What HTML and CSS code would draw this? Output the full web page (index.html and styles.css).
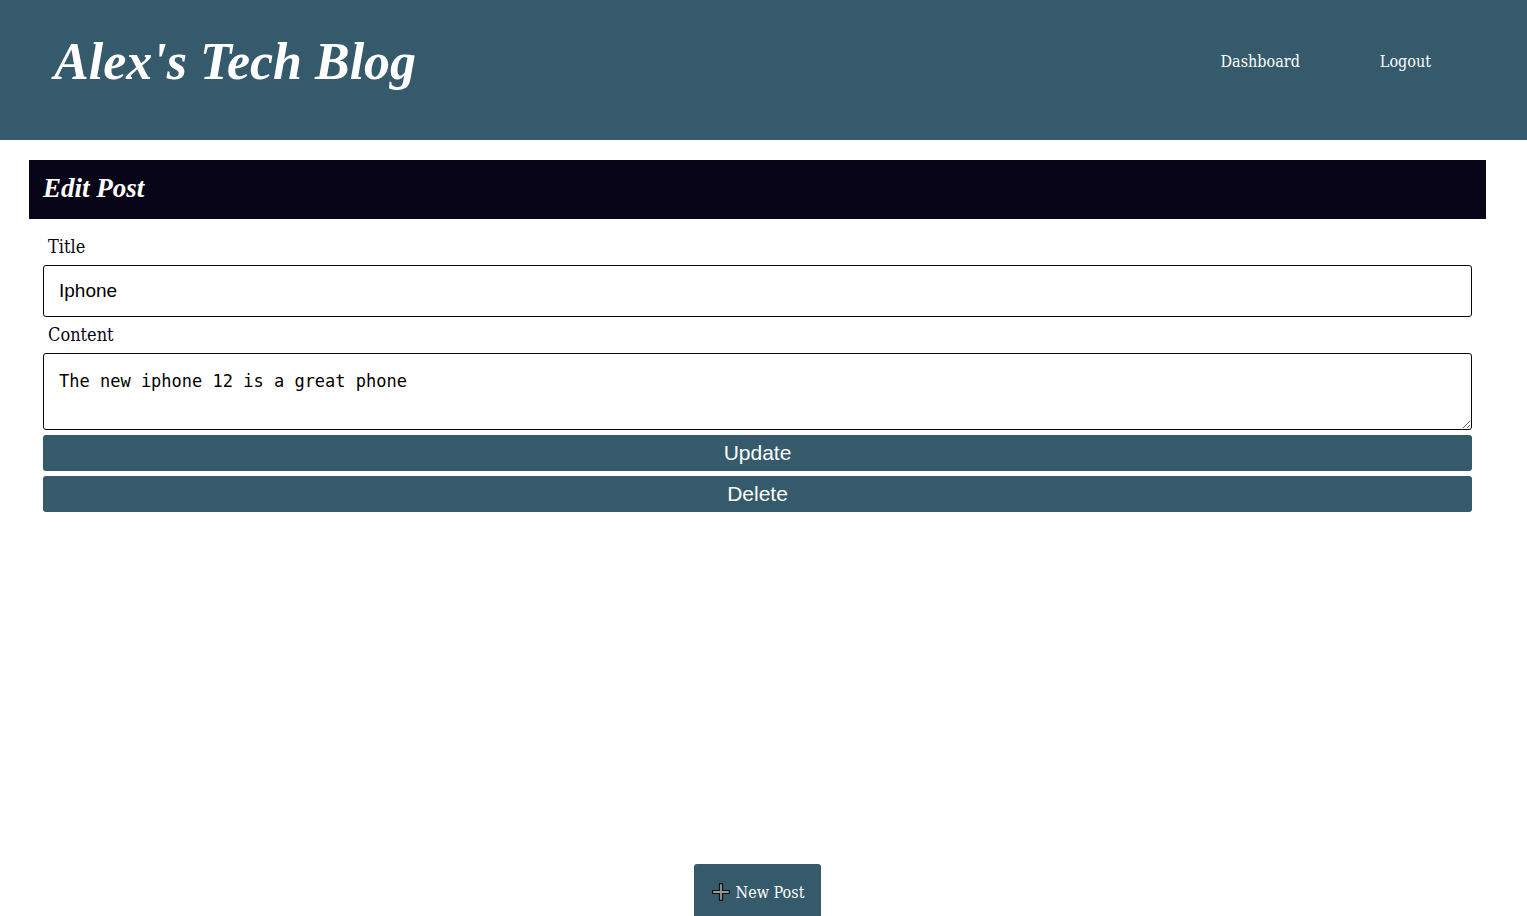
FILE: index.html
```html
<!DOCTYPE html>
<html lang="en">
<head>
  <meta charset="utf-8">
  <meta name="viewport" content="width=device-width, initial-scale=1">
  <title>Alex's Tech Blog</title>
  <link rel="stylesheet" href="styles.css">
</head>
<body>
  <header class="site-header">
    <h1 class="brand">Alex's Tech Blog</h1>
    <nav class="site-nav">
      <a href="#dashboard">Dashboard</a>
      <a href="#logout">Logout</a>
    </nav>
  </header>
  <main class="content">
    <h2 class="panel-title">Edit Post</h2>
    <form class="post-form">
      <label for="title">Title</label>
      <input id="title" type="text" value="Iphone">
      <label for="body">Content</label>
      <textarea id="body">The new iphone 12 is a great phone</textarea>
      <button type="submit">Update</button>
      <button type="button">Delete</button>
    </form>
  </main>
  <footer class="site-footer">
    <a class="new-post" href="#new">
      <svg class="plus" viewBox="0 0 18 18" aria-hidden="true">
        <path d="M7.5 .6h3v6.9h6.9v3h-6.9v6.9h-3v-6.9H.6v-3h6.9z" fill="#999" stroke="#111" stroke-width="1.2"/>
      </svg>
      <span>New Post</span>
    </a>
  </footer>
</body>
</html>
```
FILE: styles.css
```css
* {
  box-sizing: border-box;
}

body {
  display: flex;
  flex-direction: column;
  min-height: 100vh;
  margin: 0;
  background: #fff;
  color: #080518;
  font-family: "DejaVu Serif Condensed", "DejaVu Serif", serif;
}

h1,
h2 {
  margin: 0;
  color: #fff;
  font-family: "Liberation Serif", serif;
  font-style: italic;
  font-weight: 700;
}

.site-header {
  display: flex;
  justify-content: space-between;
  align-items: flex-start;
  min-height: 140px;
  padding: 32px 96px 0 54px;
  background: #345a6c;
}

.brand {
  font-size: 52px;
  line-height: 60px;
}

.site-nav {
  display: flex;
  gap: 80px;
}

.site-nav a {
  color: #fff;
  font-size: 16px;
  line-height: 60px;
  text-decoration: none;
}

.content {
  margin: 20px 41px 0 29px;
}

.panel-title {
  padding: 12px 14px 15px;
  background: #080518;
  font-size: 27px;
  line-height: 32px;
}

.post-form {
  display: flex;
  flex-direction: column;
  padding: 10px 14px;
}

.post-form label {
  padding: 0 5px;
  font-size: 18px;
  line-height: 36px;
}

.post-form input,
.post-form textarea {
  width: 100%;
  margin: 0;
  padding: 15px;
  border: 1px solid #080518;
  border-radius: 3px;
  background: #fff;
  color: #000;
}

.post-form input {
  height: 52px;
  font: 19px "Liberation Sans", Arial, sans-serif;
}

.post-form textarea {
  height: 77px;
  font: 17px/24px "DejaVu Sans Mono", monospace;
  resize: vertical;
}

.post-form button {
  height: 36px;
  margin-top: 5px;
  padding: 0;
  border: 0;
  border-radius: 3px;
  background: #345a6c;
  color: #fff;
  font: 21px "Liberation Sans", Arial, sans-serif;
}

.site-footer {
  display: flex;
  justify-content: center;
  margin-top: auto;
  padding-right: 12px;
}

.new-post {
  display: flex;
  gap: 6px;
  align-items: center;
  height: 52px;
  padding: 4px 17px 0 18px;
  border-radius: 3px 3px 0 0;
  background: #345a6c;
  color: #fff;
  font-size: 16px;
  text-decoration: none;
}

.plus {
  width: 18px;
  height: 18px;
}
```
